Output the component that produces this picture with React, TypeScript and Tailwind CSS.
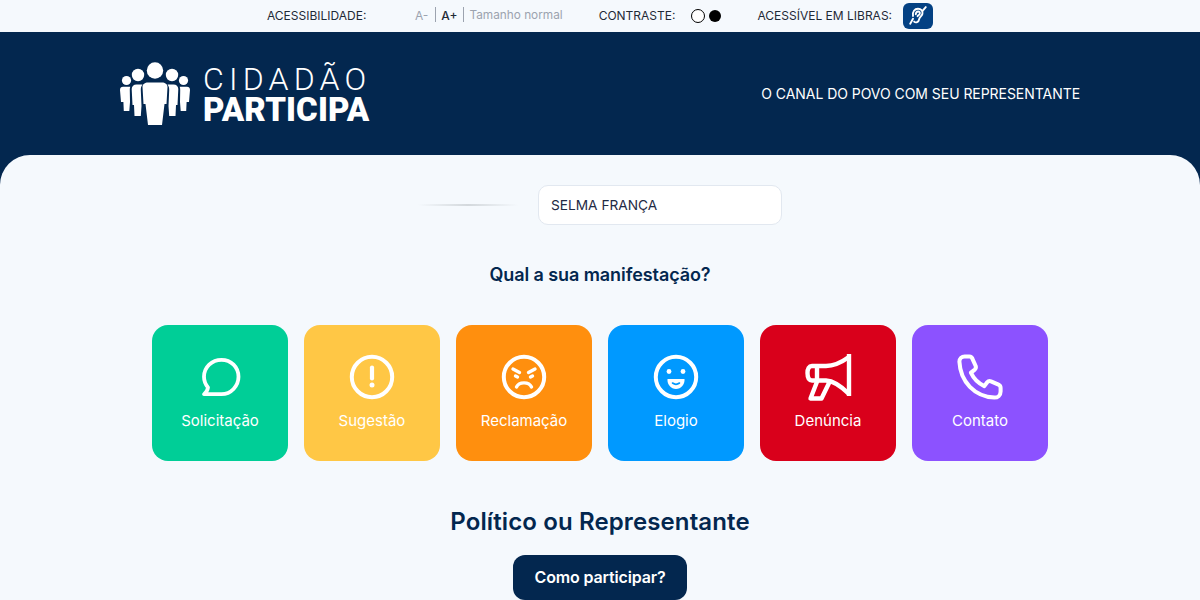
const cards = [
  { label: 'Solicitação', bg: 'bg-[#00ce97]', icon: <ChatIcon /> },
  { label: 'Sugestão', bg: 'bg-[#ffc745]', icon: <AlertIcon /> },
  { label: 'Reclamação', bg: 'bg-[#ff8f0e]', icon: <AngryIcon /> },
  { label: 'Elogio', bg: 'bg-[#0099ff]', icon: <HappyIcon /> },
  { label: 'Denúncia', bg: 'bg-[#d9001b]', icon: <MegaphoneIcon /> },
  { label: 'Contato', bg: 'bg-[#8c52ff]', icon: <PhoneIcon /> },
]

function ChatIcon() {
  return (
    <svg width="46" height="46" viewBox="0 0 46 46" fill="none" stroke="white" strokeWidth="3.8" strokeLinejoin="round" strokeLinecap="round">
      <path d="M7 40.2 H24.5 C34 40.2 41.5 32 41.5 22.8 C41.5 13 34 5.8 24.5 5.8 C15 5.8 7 13 7 22.8 C7 27 8.5 30.5 11 33.5 C10.5 36.5 9 38.8 7 40.2 Z" />
    </svg>
  )
}

function AlertIcon() {
  return (
    <svg width="46" height="46" viewBox="0 0 46 46" fill="none" stroke="white">
      <circle cx="23" cy="23" r="20.2" strokeWidth="4" />
      <path d="M23 13.5 V24.5" strokeWidth="4.2" strokeLinecap="round" />
      <circle cx="23" cy="31" r="2.5" fill="white" stroke="none" />
    </svg>
  )
}

function AngryIcon() {
  return (
    <svg width="46" height="46" viewBox="0 0 46 46" fill="none" stroke="white" strokeLinecap="round">
      <circle cx="23" cy="23" r="20.2" strokeWidth="4" />
      <path d="M12 15 L18.5 18.5 M34 15 L27.5 18.5" strokeWidth="3.4" />
      <path d="M14.5 22 L16.5 23 M31.5 22 L29.5 23" strokeWidth="3.4" />
      <path d="M15.5 33 C18 27.5 28 27.5 30.5 33" strokeWidth="3.4" />
    </svg>
  )
}

function HappyIcon() {
  return (
    <svg width="46" height="46" viewBox="0 0 46 46" fill="none" stroke="white">
      <circle cx="23" cy="23" r="20.2" strokeWidth="4" />
      <circle cx="16" cy="17.5" r="2.4" fill="white" stroke="none" />
      <circle cx="30" cy="17.5" r="2.4" fill="white" stroke="none" />
      <path d="M14.5 25 H31.5 C32 30.5 28 35 23 35 C18 35 14 30.5 14.5 25 Z" fill="white" stroke="none" />
      <path d="M19.5 29 C21.5 30.5 24.5 30.5 26.5 29" stroke="#0099ff" strokeWidth="1.6" strokeLinecap="round" />
    </svg>
  )
}

function MegaphoneIcon() {
  return (
    <svg width="48" height="48" viewBox="0 0 48 48" fill="none" stroke="white" strokeWidth="4.4" strokeLinejoin="round">
      <path d="M45 1 V43" />
      <path d="M45 4 C38 9 30 13 22 13 H8 C5 13 3.5 15.5 3.5 20 C3.5 24.5 5 27.5 8 27.5 H22 C31 28 38 34 45 41" />
      <path d="M13 13 V27.5" />
      <path d="M13.5 27.5 L6.5 45.5 H17.5 L25.5 29" />
    </svg>
  )
}

function PhoneIcon() {
  return (
    <svg width="46" height="46" viewBox="0 0 48 48" fill="none" stroke="white" strokeWidth="4.2" strokeLinejoin="round" strokeLinecap="round">
      <path d="M8 2.5 H13 C14.5 2.5 15.5 3.3 16 4.8 L19.5 12.5 C20 14 19.5 15.5 18.3 16.5 L14.5 19.5 C17.5 26 22 30.5 28.5 33.5 L31.5 29.5 C32.5 28.3 34 28 35.5 28.5 L43.3 32 C44.8 32.7 45.5 34 45.5 35.5 V39 C45.5 43 42.5 45.5 39 45.5 C18.5 44.5 3.5 29 2.5 8 C2.5 5 5 2.5 8 2.5 Z" />
    </svg>
  )
}

function EarIcon() {
  return (
    <svg width="20" height="20" viewBox="0 0 18 18" fill="none" stroke="white" strokeWidth="1.7" strokeLinecap="round">
      <path d="M4.5 9 C3.8 5 6 2.5 9 2.5 C11.7 2.5 13.5 4.5 13 7 C12.6 9 10.5 9.8 10 12 C9.6 14.5 7 15.5 5.5 14" />
      <path d="M7 7.5 C7 5.8 8 5 9.2 5 C10.4 5 11 6 10.5 7.2 C10.2 8 9 8.2 8.6 9.2" />
      <path d="M16 1 L13.5 4 M4.5 11.5 L2 16" />
    </svg>
  )
}

function LogoPeople() {
  return (
    <svg width="70" height="64" viewBox="0 0 70 64" fill="white">
      <circle cx="35" cy="8.5" r="8.2" />
      <circle cx="18" cy="13" r="6.2" />
      <circle cx="52" cy="13" r="6.2" />
      <circle cx="6.5" cy="18.5" r="4.6" />
      <circle cx="63.5" cy="18.5" r="4.6" />
      <path d="M22.5 25 C22.5 22 25 20.5 28 20.5 H42 C45 20.5 47.5 22 47.5 25 L46.5 42 H44.5 L42 63 H28 L25.5 42 H23.5 Z" />
      <path d="M11.7 27 C11.7 24.5 13.7 22.5 16.5 22.5 H22.5 C21 24.5 20.8 26 20.8 28 L21.5 44 L20.8 54 H14.5 L14 43 H12.5 Z" />
      <path d="M58.3 27 C58.3 24.5 56.3 22.5 53.5 22.5 H47.5 C49 24.5 49.2 26 49.2 28 L48.5 44 L49.2 54 H55.5 L56 43 H57.5 Z" />
      <path d="M0 28 C0 26 1.2 24.8 3 24.8 H10.3 C9.8 26 9.8 27 9.8 28.5 L10 40 L9.3 49 H3.8 L3.4 40 H1 Z" />
      <path d="M70 28 C70 26 68.8 24.8 67 24.8 H59.7 C60.2 26 60.2 27 60.2 28.5 L60 40 L60.7 49 H66.2 L66.6 40 H69 Z" />
    </svg>
  )
}

export default function App() {
  return (
    <div className="h-[600px] overflow-hidden bg-[#f5f9fd] font-['Inter',sans-serif] text-[#03274f]">
      <div className="flex h-8 items-center justify-center text-xs text-[#1f2a37]">
        <span className="w-[148px]">ACESSIBILIDADE:</span>
        <span className="text-[#9ca3af]">A-</span>
        <span className="-mt-[3px] ml-[7px] mr-[5px] h-[15px] w-px bg-[#9ca3af]" />
        <span className="font-medium">A+</span>
        <span className="-mt-[3px] ml-[6px] mr-[5px] h-[15px] w-px bg-[#9ca3af]" />
        <span className="text-[11.8px] text-[#9ca3af]">Tamanho normal</span>
        <span className="ml-9">CONTRASTE:</span>
        <span className="ml-4 h-[14px] w-[14px] rounded-full border border-black bg-white" />
        <span className="ml-[4px] h-3 w-3 rounded-full bg-black" />
        <span className="ml-9">ACESSÍVEL EM LIBRAS:</span>
        <span className="ml-[11px] flex h-[26px] w-[30px] items-center justify-center rounded-md bg-[#034183]">
          <EarIcon />
        </span>
      </div>

      <header className="flex h-[153px] items-start justify-between bg-[#03274f] px-[120px] pt-[30px]">
        <div className="flex items-center gap-[13px]">
          <LogoPeople />
          <div className="flex flex-col text-white">
            <span className="font-['Roboto',sans-serif] text-[32px] font-light leading-[32px] tracking-[5.2px]">CIDADÃO</span>
            <span className="font-['Roboto',sans-serif] text-[33px] font-black leading-[30px] tracking-[0.1px]">PARTICIPA</span>
          </div>
        </div>
        <p className="mt-[23px] text-sm leading-[18px] tracking-[-0.05px] text-white">O CANAL DO POVO COM SEU REPRESENTANTE</p>
      </header>

      <main className="-mt-[30px] flex flex-col items-center rounded-t-[30px] bg-[#f5f9fd] pt-[30px]">
        <div className="flex h-10 items-center gap-[20px]">
          <div className="h-[2px] w-[100px] bg-gradient-to-r from-transparent via-[#d3d8dc] to-transparent" />
          <div className="flex h-10 w-[244px] items-center rounded-[10px] border border-[#e2e8f0] bg-white px-3 text-[13.7px] text-[#1f2a44]">
            SELMA FRANÇA
          </div>
        </div>

        <h2 className="mt-[36px] text-lg font-semibold leading-7 tracking-[-0.08px]">Qual a sua manifestação?</h2>

        <div className="mt-[36px] flex gap-4">
          {cards.map((card) => (
            <div key={card.label} className={`flex h-[136px] w-[136px] flex-col items-center rounded-2xl pt-[28px] text-white ${card.bg}`}>
              <div className="flex h-12 items-center justify-center">{card.icon}</div>
              <span className="mt-[8px] text-[15px] leading-6">{card.label}</span>
            </div>
          ))}
        </div>

        <h2 className="mt-[45px] text-2xl font-semibold leading-8 tracking-[0.12px]">Político ou Representante</h2>

        <button className="mt-[17px] h-[45px] w-[174px] rounded-xl bg-[#03274f] pb-[2px] text-base font-semibold tracking-[-0.15px] text-white">Como participar?</button>
      </main>
    </div>
  )
}
